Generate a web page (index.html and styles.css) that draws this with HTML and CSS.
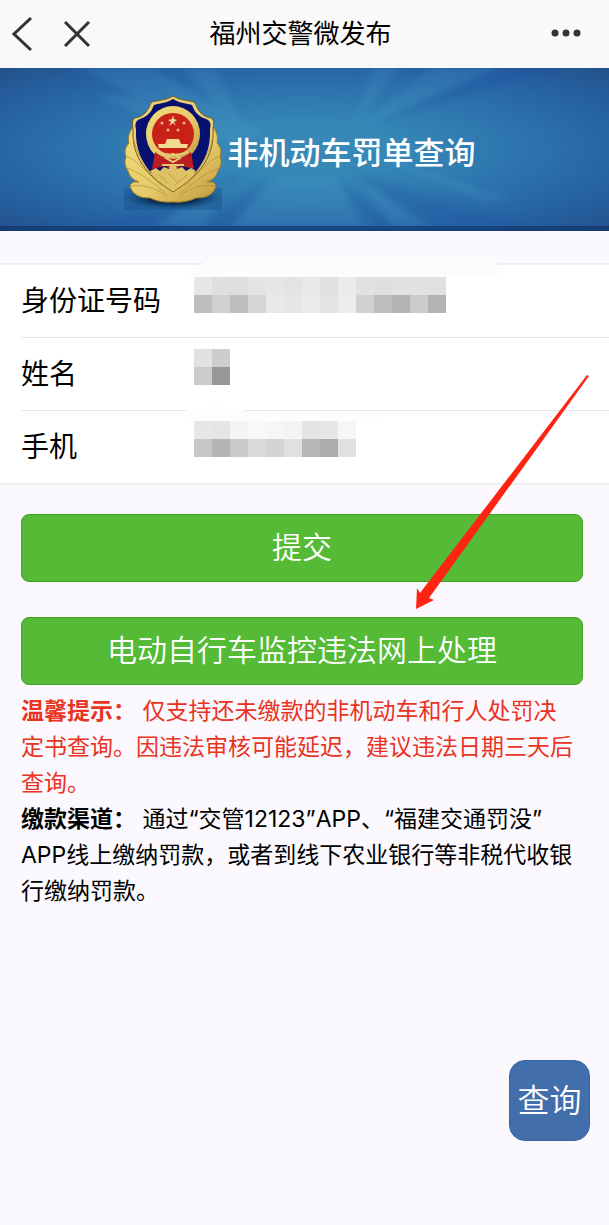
FILE: index.html
```
<!DOCTYPE html>
<html lang="zh-CN">
<head>
  <title>福州交警微发布</title>
  <meta charset="UTF-8"/>
  <meta name="viewport" content="width=device-width, initial-scale=1">
  <link rel="stylesheet" href="styles.css">
</head>
<body>
    <header class="navbar">
      <div class="nav-left">
        <button type="button" class="icon-btn" aria-label="返回">
          <svg width="20" height="36" viewBox="0 0 20 36"><path d="M19 2 L2 18 L19 34" /></svg>
        </button>
        <button type="button" class="icon-btn" aria-label="关闭">
          <svg width="26" height="26" viewBox="0 0 26 26"><path d="M1 1 L25 25 M25 1 L1 25" /></svg>
        </button>
      </div>
      <h1>福州交警微发布</h1>
      <div class="nav-right">
        <button type="button" class="icon-btn" aria-label="更多">
          <svg width="30" height="8" viewBox="0 0 30 8"><g class="dots"><circle cx="4" cy="4" r="3.5"/><circle cx="15" cy="4" r="3.5"/><circle cx="26" cy="4" r="3.5"/></g></svg>
        </button>
      </div>
    </header>

    <div class="banner">
      <svg class="rays" viewBox="0 0 607 163" preserveAspectRatio="none">
        <defs><filter id="soft"><feGaussianBlur stdDeviation="3"/></filter></defs>
        <g fill="#5ab0d8" opacity="0.15" filter="url(#soft)">
          <path d="M230 80 L80 0 L150 0 L262 66 Z"/>
          <path d="M250 75 L182 0 L215 0 Z"/>
          <path d="M345 70 L430 0 L495 0 Z"/>
          <path d="M350 62 L372 0 L398 0 Z"/>
          <path d="M230 90 L95 28 L160 30 Z"/>
          <path d="M370 88 L510 135 L480 138 Z"/>
          <path d="M230 110 L155 163 L205 163 Z"/>
          <path d="M280 110 L230 163 L360 163 L335 110 Z"/>
          <path d="M360 118 L390 163 L430 163 Z"/>
        </g>
        <g fill="#1b4da0" opacity="0.2" filter="url(#soft)">
          <path d="M250 105 L95 163 L150 163 Z"/>
          <path d="M265 112 L205 163 L230 163 Z"/>
          <path d="M335 115 L375 163 L395 163 Z"/>
          <path d="M355 108 L430 163 L520 163 Z"/>
          <path d="M375 55 L500 0 L560 0 Z"/>
        </g>
      </svg>
      <!-- police badge -->
      <svg class="badge" width="98" height="116" viewBox="0 0 98 116">
        <defs>
          <linearGradient id="gold" x1="0" y1="0" x2="1" y2="1">
            <stop offset="0" stop-color="#f3dc7c"/>
            <stop offset="0.55" stop-color="#e6ca69"/>
            <stop offset="1" stop-color="#bd963a"/>
          </linearGradient>
          <radialGradient id="shade">
            <stop offset="0.5" stop-color="#082a4d" stop-opacity="0.95"/>
            <stop offset="1" stop-color="#104779" stop-opacity="0.1"/>
          </radialGradient>
        </defs>
        <rect x="0" y="93" width="98" height="22" fill="#154f84" opacity="0.4"/>
        <ellipse cx="49" cy="103" rx="48" ry="11" fill="url(#shade)"/>
        <path d="M8 33 Q3 41 5 48 Q-1 54 2 62 Q-1 69 4 76 Q6 84 15 87 Q6 86 6 92 Q11 104 26 103 Q36 108 49 107 Q62 108 72 103 Q87 104 92 92 Q92 86 83 87 Q92 84 94 76 Q99 69 96 62 Q99 54 93 48 Q95 41 90 33 Z" fill="url(#gold)" stroke="#9e7b2b"/>
        <path d="M49 1 C43 5 36 5 28 7 C25 9 26 17 15 22 C7 23 8 27 9 34 C8 55 15 76 49 97 C83 76 90 55 89 34 C90 27 91 23 83 22 C72 17 73 9 70 7 C62 5 55 5 49 1 Z" fill="#e8ce75" stroke="#765c22"/>
        <path d="M49 4 C43 8 37 8 30 10 C28 14 27 20 16 24 C11 26 11 30 12 34 C11 54 18 67 27 78 L71 78 C80 67 87 54 86 34 C87 30 87 26 82 24 C71 20 70 14 68 10 C61 8 55 8 49 4 Z" fill="#07106f"/>
        <ellipse cx="49" cy="39" rx="27" ry="28" fill="url(#gold)"/>
        <circle cx="49" cy="39" r="21" fill="#c92018"/>
        <path d="M31 57 Q49 71 67 57 L70 74 L57 71 L50 76 L41 71 L28 74 Z" fill="#b91e22"/>
        <path d="M49 20 L50 24 L53 25 L50 27 L52 31 L49 28 L45 31 L47 27 L44 25 L48 24 Z" fill="#f2d6a0"/>
        <g fill="#eeb48a"><circle cx="38" cy="28" r="1.5"/><circle cx="60" cy="28" r="1.5"/><circle cx="44" cy="35" r="1.5"/><circle cx="54" cy="35" r="1.5"/></g>
        <path d="M43 44 H55 L57 49 H64 L63 53 H35 L34 49 H41 Z" fill="#f2dc91"/>
        <path d="M34 57 Q49 63 64 57 M42 63 L49 59 L56 63 L49 67 Z M38 70 H60" fill="none" stroke="#e7c778" stroke-width="2"/>
        <path d="M26 76 L32 73 L36 76 L40 72 L45 74 L46 70 H52 L53 74 L58 72 L62 76 L67 73 L72 76 C66 84 58 91 49 96 C40 91 32 84 26 76 Z" fill="#dfc264"/>
        <path d="M9 41 C12 58 20 72 35 87 L49 97 L63 87 C78 72 86 58 89 41 M3 61 C15 67 22 77 38 91 M95 61 C83 67 76 77 60 91 M3 73 C18 78 28 88 42 98 M95 73 C80 78 70 88 56 98 M7 91 Q25 88 43 101 M91 91 Q73 88 55 101 M35 80 L45 89 M44 78 L54 88 M63 80 L51 90" fill="none" stroke="#ad8836" stroke-width="1" opacity="0.6"/>
      </svg>
      <h2>非机动车罚单查询</h2>
    </div>

    <form class="query-form">
      <div class="cells">
        <div class="cell">
          <label for="idcard">身份证号码</label>
          <div class="field">
            <input type="text" id="idcard" name="idcard">
            <svg class="mosaic" width="320" height="58" viewBox="0 0 320 58">
              <path d="M0 18 Q8 3 34 0 H305 Q309 1 316 18 Z" fill="#fcfcfc"/>
              <g id="idcardMask"></g>
            </svg>
          </div>
        </div>
        <div class="cell">
          <label for="username">姓名</label>
          <div class="field">
            <input type="text" id="username" name="username">
            <svg class="mosaic" width="320" height="58" viewBox="0 0 320 58">
              <g id="usernameMask"></g>
            </svg>
          </div>
        </div>
        <div class="cell">
          <label for="phone">手机</label>
          <div class="field">
            <input type="tel" id="phone" name="phone">
            <svg class="mosaic" width="320" height="58" viewBox="0 0 320 58">
              <path d="M0 16 V5 Q12 2 30 2 Q50 2 59 6 Q150 6 198 16 Z" fill="#fdfdfd"/>
              <g id="phoneMask"></g>
            </svg>
          </div>
        </div>
      </div>

      <div class="actions">
        <button type="button" class="btn">提交</button>
        <button type="button" class="btn">电动自行车监控违法网上处理</button>
        <!-- pointer to the second button -->
        <svg class="arrow" width="174" height="234" viewBox="0 0 174 234"><path d="M172 0 L174 1 L14 223 L19 225 L1 234 L2 213 L5 218 Z" fill="#ff2312"/></svg>
      </div>
    </form>

    <div class="tips">
      <p class="warn"><b>温馨提示：</b> 仅支持还未缴款的非机动车和行人处罚决定书查询。因违法审核可能延迟，建议违法日期三天后查询。</p>
      <p><b>缴款渠道：</b> 通过“交管12123”APP、“福建交通罚没”APP线上缴纳罚款，或者到线下农业银行等非税代收银行缴纳罚款。</p>
    </div>

    <button type="button" class="float-btn">查询</button>

  <script src="mask.js"></script>
</body>
</html>
```
FILE: styles.css
```
* {
    box-sizing: border-box;
}
body {
    margin: 0;
    min-height: 100vh;
    background-color: #fbf9fe;
    color: #000;
    font-family: Inter, "Noto Sans CJK SC", sans-serif;
}
button, input {
    font-family: inherit;
}
.navbar {
    display: grid;
    grid-template-columns: 1fr auto 1fr;
    align-items: center;
    height: 68px;
    padding: 0 20px 0 12px;
    background-color: #f9f9f9;
}
.navbar h1 {
    margin: 0;
    font-size: 26px;
    line-height: 40px;
    font-weight: 400;
}
.nav-left {
    display: flex;
    align-items: center;
    gap: 32px;
}
.nav-right {
    display: flex;
    justify-content: flex-end;
    padding: 0 8px 3px 0;
}
.icon-btn {
    display: flex;
    padding: 0;
    border: none;
    background: none;
    cursor: pointer;
}
.icon-btn path {
    fill: none;
    stroke: #333;
    stroke-width: 3;
}
.dots {
    fill: #333;
}
/* blue banner */
.banner {
    position: relative;
    display: flex;
    align-items: center;
    justify-content: center;
    gap: 6px;
    height: 163px;
    padding: 12px 10px 0 0;
    border-bottom: 5px solid rgba(8, 37, 85, 0.5);
    background-image: radial-gradient(ellipse at 50% 50%, #3a8ab8 0%, #3585b6 25%, #2c71ad 55%, #255fa1 80%, #235189 100%);
    background-origin: border-box;
}
.rays {
    position: absolute;
    left: 0;
    top: 0;
    width: 100%;
    height: 100%;
}
.badge {
    position: relative;
}
.banner h2 {
    position: relative;
    margin: 0;
    color: #fff;
    font-size: 31px;
    line-height: 44px;
    font-weight: 500;
}
/* form rows */
.cells {
    margin-top: 32px;
    padding-left: 21px;
    border-top: 2px solid #efeef2;
    border-bottom: 2px solid #efeef2;
    background-color: #fff;
}
.cell {
    display: flex;
    align-items: center;
    box-sizing: content-box;
    height: 72px;
}
.cell + .cell {
    border-top: 1px solid #e6e6e6;
}
.cell label {
    width: 166px;
    font-size: 28px;
    line-height: 40px;
}
.field {
    position: relative;
    flex: 1;
}
.field input {
    display: block;
    width: 100%;
    height: 54px;
    padding: 0;
    border: none;
    outline: none;
    background: transparent;
    font-size: 28px;
}
.mosaic {
    position: absolute;
    left: 0;
    top: -15px;
    pointer-events: none;
}
.actions {
    position: relative;
    display: flex;
    flex-direction: column;
    gap: 35px;
    padding: 29px 26px 0 21px;
}
.btn {
    height: 68px;
    padding: 0 0 6px;
    border: 1px solid #41a127;
    border-radius: 8px;
    background-color: #55ba36;
    color: #fff;
    font-size: 30px;
    font-weight: 350;
    cursor: pointer;
}
.arrow {
    position: absolute;
    right: 20px;
    bottom: 76px;
    pointer-events: none;
}
.tips {
    padding: 8px 32px 0 21px;
    font-size: 23px;
    line-height: 36px;
}
.tips p {
    margin: 0;
}
.tips .warn {
    color: #e93323;
}
.float-btn {
    position: fixed;
    right: 19px;
    bottom: 84px;
    width: 81px;
    height: 81px;
    padding: 0 0 6px;
    border: 1px solid #3765a8;
    border-radius: 16px;
    background-color: #426eab;
    color: #fff;
    font-size: 32px;
    font-weight: 350;
    cursor: pointer;
}
```
FILE: mask.js
```
// grey levels of the blocks that hide each value, two rows per field
const masks = {
    idcardMask: [
        [231, 223, 222, 228, 230, 227, 233, 225, 235, 225, 223, 226, 226, 225],
        [190, 208, 190, 214, 233, 230, 235, 228, 237, 209, 190, 180, 203, 179]
    ],
    usernameMask: [
        [225, 205],
        [203, 151]
    ],
    phoneMask: [
        [231, 229, 245, 248, 246, 243, 228, 231, 246],
        [200, 181, 201, 218, 212, 224, 182, 172, 225]
    ]
};

const size = 18;
const tops = { idcardMask: 18, usernameMask: 17, phoneMask: 16 };

for (const id in masks) {
    const group = document.getElementById(id);
    masks[id].forEach((row, y) => {
        row.forEach((level, x) => {
            const rect = document.createElementNS("http://www.w3.org/2000/svg", "rect");
            rect.setAttribute("x", 7 + x * size);
            rect.setAttribute("y", tops[id] + y * size);
            rect.setAttribute("width", size);
            rect.setAttribute("height", size);
            rect.setAttribute("fill", `rgb(${level}, ${level}, ${level})`);
            group.appendChild(rect);
        });
    });
}
```
